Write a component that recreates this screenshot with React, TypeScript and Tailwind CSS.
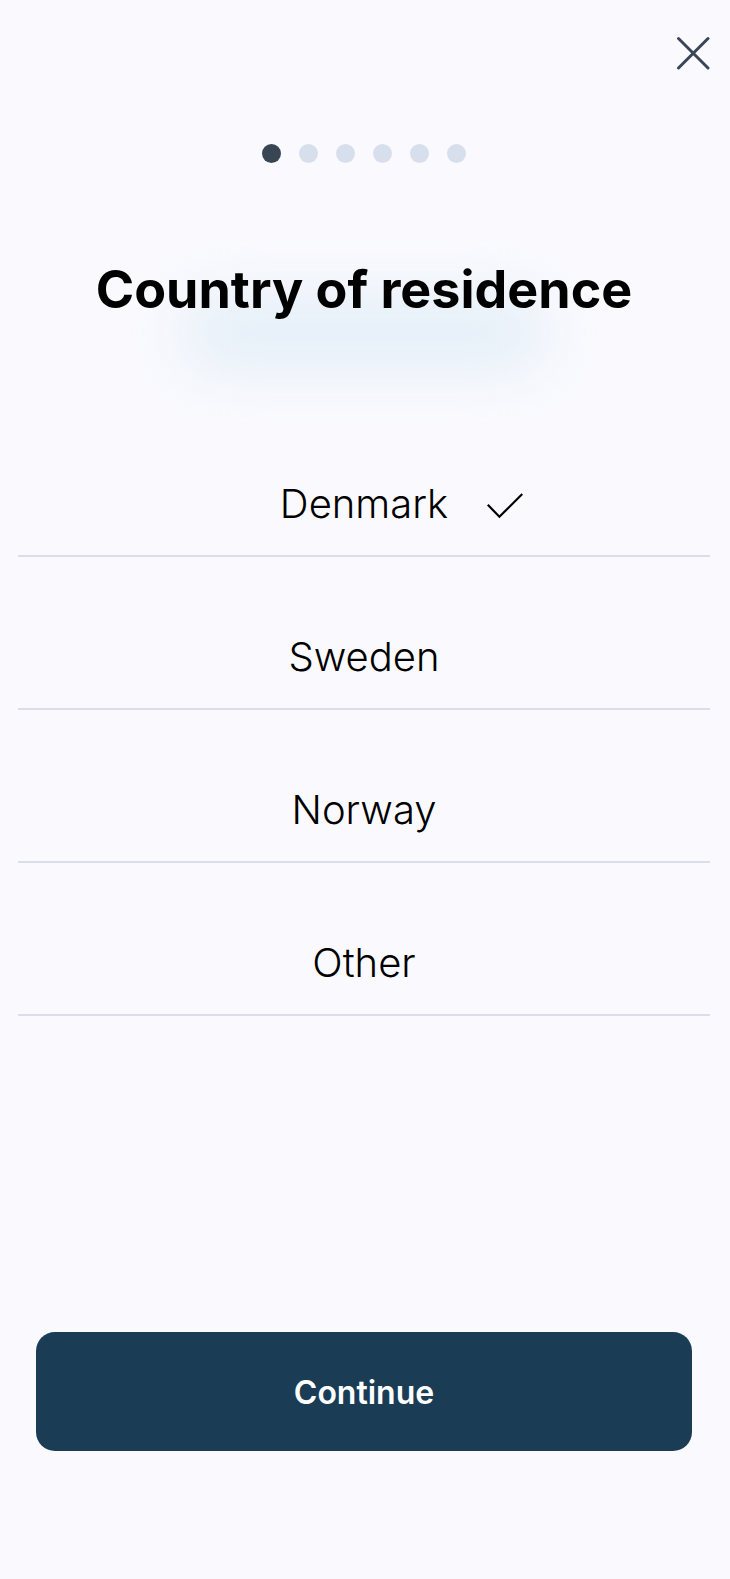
import { useState } from "react";

const countries = ["Denmark", "Sweden", "Norway", "Other"];
const steps = [1, 2, 3, 4, 5, 6];

function CloseIcon() {
  return (
    <svg viewBox="0 0 34 34" className="size-[34px]" fill="none" stroke="#3a4656" strokeWidth="3" strokeLinecap="round" aria-hidden="true">
      <path d="M2.5 2.5 32 32M32 2.5 2.5 32" />
    </svg>
  );
}

function CheckIcon() {
  return (
    <svg viewBox="0 0 36 26" className="h-[26px] w-9" fill="none" stroke="#000" strokeWidth="2.2" aria-hidden="true">
      <path d="M.8 11.8 12.4 23.8 35.3 1" />
    </svg>
  );
}

export default function App() {
  const [selected, setSelected] = useState("Denmark");

  return (
    <main className="flex min-h-screen flex-col bg-[#fafafe] pr-5 pl-[18px] font-['Inter',sans-serif] text-black">
      <header className="flex justify-end pt-9">
        <button type="button" aria-label="Close">
          <CloseIcon />
        </button>
      </header>

      <ol className="mt-[74px] flex justify-center gap-[18px]">
        {steps.map((step) => (
          <li
            key={step}
            aria-current={step === 1 ? "step" : undefined}
            className={`size-[19px] rounded-full ${step === 1 ? "bg-[#384552]" : "bg-[#d8dfec]"}`}
          />
        ))}
      </ol>

      <div className="relative isolate mt-[101px] text-center">
        <div className="absolute inset-x-[24%] top-8 -z-10 h-[72px] rounded-3xl bg-[#e3eef7] blur-[30px]" />
        <h1 id="title" className="text-[52px] leading-[52px] font-bold">Country of residence</h1>
      </div>

      <div role="radiogroup" aria-labelledby="title" className="mt-[88px]">
        {countries.map((country) => (
          <label
            key={country}
            className="flex cursor-pointer justify-center border-b-2 border-[#dadeea] pt-20 pb-[31px] text-[40px] leading-10 font-light"
          >
            <input
              type="radio"
              name="country"
              value={country}
              checked={selected === country}
              onChange={() => setSelected(country)}
              className="sr-only"
            />
            <span className="relative">
              {country}
              {selected === country && (
                <span className="absolute inset-y-0 left-full ml-[39px] flex items-center pt-1">
                  <CheckIcon />
                </span>
              )}
            </span>
          </label>
        ))}
      </div>

      <div className="mt-auto px-[18px] pt-20 pb-32">
        <button type="button" className="h-[119px] w-full rounded-[19px] bg-[#1b3c55] pt-[2px] text-[32px] leading-10 font-semibold text-white">
          Continue
        </button>
      </div>
    </main>
  );
}
